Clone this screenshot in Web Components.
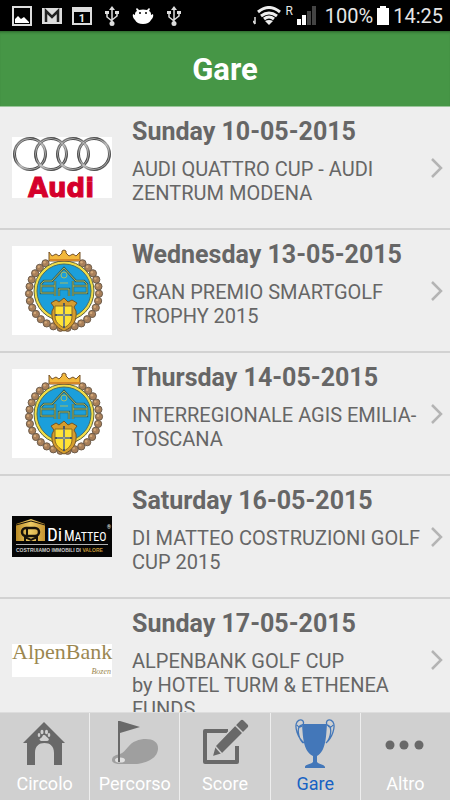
<!DOCTYPE html>
<html lang="it">
<head>
<meta charset="utf-8">
<meta name="viewport" content="width=device-width, initial-scale=1">
<title>Gare</title>
<style>
    body {
        margin: 0;
        background: #eee;
        font-family: Roboto, "Liberation Sans", sans-serif;
    }
</style>
</head>
<body>
<golf-app>
    <status-bar slot="status" time="14:25" battery="100%"></status-bar>
    <page-header slot="header">Gare</page-header>
    <match-row logo="audi" date="Sunday 10-05-2015">AUDI QUATTRO CUP - AUDI ZENTRUM MODENA</match-row>
    <match-row logo="crest" date="Wednesday 13-05-2015">GRAN PREMIO SMARTGOLF TROPHY 2015</match-row>
    <match-row logo="crest" date="Thursday 14-05-2015">INTERREGIONALE AGIS EMILIA-TOSCANA</match-row>
    <match-row logo="dimatteo" date="Saturday 16-05-2015">DI MATTEO COSTRUZIONI GOLF CUP 2015</match-row>
    <match-row logo="alpenbank" date="Sunday 17-05-2015">ALPENBANK GOLF CUP<br>by HOTEL TURM &amp; ETHENEA FUNDS</match-row>
    <tab-bar slot="tabs">
        <tab-item icon="house" href="#circolo">Circolo</tab-item>
        <tab-item icon="flag" href="#percorso">Percorso</tab-item>
        <tab-item icon="edit" href="#score">Score</tab-item>
        <tab-item icon="cup" href="#gare" active>Gare</tab-item>
        <tab-item icon="dots" href="#altro">Altro</tab-item>
    </tab-bar>
</golf-app>

<script>
// Beads of the wreath around the crest
function wreath() {
    let beads = '';
    for (let i = 0; i < 26; i++) {
        const angle = (-58 + i * 296 / 25) * Math.PI / 180;
        const x = 52 + 35 * Math.cos(angle);
        const y = 47 + 35 * Math.sin(angle);
        beads += `<circle cx="${x.toFixed(1)}" cy="${y.toFixed(1)}" r="3.6" fill="#a9805a" stroke="#6d5c4b" stroke-width="1"/>
            <circle cx="${(x - 1).toFixed(1)}" cy="${(y - 1).toFixed(1)}" r="1.2" fill="#d3a878"/>`;
    }
    return beads;
}

const LOGOS = {
    audi: `<svg width="100" height="61" viewBox="0 0 100 61" role="img" aria-label="Audi">
        <defs><linearGradient id="steel" x1="0" y1="0" x2="1" y2="1">
            <stop offset="0" stop-color="#aaa"/><stop offset=".3" stop-color="#3a3a3a"/>
            <stop offset=".55" stop-color="#aaa"/><stop offset=".8" stop-color="#444"/><stop offset="1" stop-color="#888"/>
        </linearGradient></defs>
        <path fill="#fff" d="M0 0h100v61H0z"/>
        <g fill="none" stroke="url(#steel)" stroke-width="3">
            <circle cx="18" cy="17" r="15.5"/><circle cx="39" cy="17" r="15.5"/>
            <circle cx="61" cy="17" r="15.5"/><circle cx="82" cy="17" r="15.5"/>
        </g>
        <g fill="none" stroke="#ddd" stroke-width=".6">
            <circle cx="18" cy="17" r="15.5"/><circle cx="39" cy="17" r="15.5"/>
            <circle cx="61" cy="17" r="15.5"/><circle cx="82" cy="17" r="15.5"/>
        </g>
        <text x="49" y="60" text-anchor="middle" font-family="DejaVu Sans" font-weight="700" font-size="26" fill="#d5002b" stroke="#d5002b" stroke-width="1">Audi</text>
    </svg>`,
    crest: `<svg width="100" height="89" viewBox="0 0 100 89" role="img" aria-label="Golf club crest">
        <path fill="#fff" d="M0 0h100v89H0z"/>
        ${wreath()}
        <circle cx="52" cy="45" r="30" fill="#f0dc47" stroke="#5c6240"/>
        <circle cx="52" cy="45" r="27" fill="#1b9fdb" stroke="#486e67"/>
        <path d="M37 15V6l3 4 4-2 3 2 3-3V5l2-1 2 1v2l3 3 4-2 3 2 4-4v9z" fill="#f2b83c" stroke="#79552b"/>
        <path d="M38 14h30" stroke="#d68829" stroke-width="2"/>
        <g fill="none" stroke="#305f63" stroke-width="2.4">
            <path d="M42 47H29V38l3-3h8l12-13 12 13h8l3 3v9H62M29 40h14M61 40h14M43 35v15M61 35v15M47 50V43h10v7"/>
        </g>
        <g fill="none" stroke="#b7bf58" stroke-width=".9">
            <path d="M42 47H29V38l3-3h8l12-13 12 13h8l3 3v9H62M29 40h14M61 40h14M43 35v15M61 35v15M47 50V43h10v7"/>
            <circle cx="52" cy="29" r="3"/><path d="M48 37h8"/>
        </g>
        <path d="M39 57l5-3 3 2 5-4 4 4 4-2 5 3-3 4 2 4c1 10-3 16-12 20-9-4-13-10-12-20l2-4z" fill="#d69d2d" stroke="#725525"/>
        <path d="M43 60h17v10c0 6-3 9-8 12-5-3-9-6-9-12z" fill="#ffe236" stroke="#8b6c26"/>
        <path d="M52 57v25M43 69h17" stroke="#4c5760" stroke-width="2"/>
        <path d="M52 60v20M45 69h13" stroke="#e8e7c8" stroke-width=".6"/>
    </svg>`,
    dimatteo: `<svg width="100" height="41" viewBox="0 0 100 41" role="img" aria-label="Di Matteo">
        <defs><linearGradient id="gold"><stop stop-color="#b98a25"/><stop offset=".5" stop-color="#edcb65"/><stop offset="1" stop-color="#c49432"/></linearGradient></defs>
        <path fill="#050505" d="M0 0h100v41H0z"/>
        <path fill="url(#gold)" d="M4 8l15-5 14 5v17H4z"/>
        <path d="M4 9l15-4 14 4" fill="none" stroke="#17120a" stroke-width="1"/>
        <rect x="10" y="12" width="17" height="8" rx="4" fill="none" stroke="#17120a" stroke-width="2.500"/>
        <path d="M15 13v6" stroke="#17120a" stroke-width="2"/>
        <path d="M13 25v-4l6 3 6-3v4" fill="none" stroke="#17120a" stroke-width="2"/>
        <text x="35" y="25" font-family="Roboto Condensed, Roboto, sans-serif" font-size="19" fill="#fff">Di</text>
        <text x="52" y="25" font-family="Roboto Condensed, Roboto, sans-serif" font-size="14" fill="#fff">M<tspan font-size="12">ATTEO</tspan></text>
        <text x="95" y="13" font-size="5" fill="#fff">®</text>
        <path d="M4 28.500h92" stroke="#ddd" stroke-width=".8"/>
        <text x="4" y="36" font-family="Liberation Sans, sans-serif" font-size="5" font-weight="700" fill="#ccc">COSTRUIAMO IMMOBILI DI <tspan fill="#c99a39">VALORE</tspan></text>
    </svg>`,
    alpenbank: `<svg width="100" height="33" viewBox="0 0 100 33" role="img" aria-label="AlpenBank Bozen">
        <path fill="#fff" d="M0 0h100v33H0z"/>
        <text x="0" y="15" font-family="Liberation Serif" font-size="22" fill="#9b8750">AlpenBank</text>
        <text x="99" y="30" text-anchor="end" font-family="Liberation Serif" font-style="italic" font-size="8" fill="#9b8750">Bozen</text>
    </svg>`
};

const ICONS = {
    house: `<path fill="currentColor" d="M24 3l21 21h-3v22H34V34c0-7-4-10-9.500-10S15 27 15 34v12H7V24H3z"/>
        <g fill="#d0d0d0"><path d="M24 16c2 0 2 2 4 3 2 2 0 3-1 3h-6c-2-1-2-2 0-3 2-1 1-3 3-3z"/>
        <ellipse cx="22" cy="13" rx="1.500" ry="2.200"/><ellipse cx="26.500" cy="13" rx="1.500" ry="2.200"/><ellipse cx="19" cy="16" rx="1.300" ry="2"/><ellipse cx="29" cy="16" rx="1.300" ry="2"/></g>`,
    flag: `<path fill="#9f9f9f" d="M2 41c0-4 4-5 8-6 6-2 9-11 16-13 10-4 23-2 22 8-1 11-14 14-21 15H10c-4 0-8-1-8-4z"/>
        <ellipse cx="10" cy="41" rx="5" ry="2.600" fill="#e0e0e0"/>
        <path fill="currentColor" d="M8 2h2l20 6-20 6v29H8z"/>`,
    edit: `<path d="M28 12H5v31h32V27" fill="none" stroke="currentColor" stroke-width="4" stroke-linejoin="round"/>
        <path d="M40 1q2-2 4 0l4 4q2 2 0 4L22 35l-10 3 3-11z" fill="currentColor" stroke="#d0d0d0" stroke-width="1.500" stroke-linejoin="round"/>
        <path d="M35 6l8 8M15 27l7 8" stroke="#d0d0d0" stroke-width="1.500"/>`,
    cup: `<g fill="none" stroke="currentColor" stroke-width="1.300"><path d="M14 24C8 19 4 8 7 3c3-4 8-2 6 3M12 6c-6 1-4 13 1 18M7 6c2 3 3 2 5 1M36 24c6-5 10-16 7-21-3-4-8-2-6 3M37 6c6 1 4 13-1 18M43 6c-2 3-3 2-5 1"/></g>
        <path fill="currentColor" d="M12 5h25c-1 13-1 27-10 32v6c1 2 7 2 8 5v1H15v-1c0-3 7-3 8-5v-6C13 32 13 18 12 5z"/>`,
    dots: `<g fill="currentColor"><circle cx="10" cy="26" r="4.500"/><circle cx="24" cy="26" r="4.500"/><circle cx="39" cy="26" r="4.500"/></g>`
};

const USB = `<svg width="14" height="20" viewBox="0 0 14 20" aria-hidden="true"><path d="M7 3v13M2 7v4l5 4M12 6v4l-5 4" fill="none" stroke="#ddd" stroke-width="1.500"/><path fill="#ddd" d="M7 0l3 4H4zM0 5h4v3H0zM10 5h4v3h-4z"/><circle cx="7" cy="17.500" r="2.500" fill="#ddd"/></svg>`;

class GolfApp extends HTMLElement {
    constructor() {
        super();
        this.attachShadow({ mode: 'open' }).innerHTML = `
            <style>
                :host { display: flex; flex-direction: column; height: 100vh; overflow: hidden; }
                main { flex: 1; min-height: 0; overflow-y: auto; scrollbar-width: none; }
            </style>
            <slot name="status"></slot>
            <slot name="header"></slot>
            <main><slot></slot></main>
            <slot name="tabs"></slot>
        `;
    }
}

class StatusBar extends HTMLElement {
    connectedCallback() {
        this.attachShadow({ mode: 'open' }).innerHTML = `
            <style>
                :host {
                    display: flex;
                    flex: none;
                    align-items: center;
                    justify-content: space-between;
                    height: 31px;
                    padding: 0 7px 0 12px;
                    background: #000;
                    color: #e6e6e6;
                    font-size: 20px;
                }
                div { display: flex; align-items: center; }
                svg { display: block; flex: none; }
                .left { gap: 10px; }
                .usb { padding: 0 3px; }
                .right { gap: 4px; }
                .roaming { font-size: 12px; align-self: flex-start; }
                .battery { padding-left: 4px; }
            </style>
            <div class="left">
                <svg width="20" height="20" viewBox="0 0 20 20"><path d="M1 1h18v18H1z" fill="none" stroke="#ddd" stroke-width="2"/><path d="M3 17v-4l3-3 3 3 3-2 5 5v1z" fill="#fff"/></svg>
                <svg width="20" height="16" viewBox="0 0 20 16"><path d="M0 0h20v16H0z" fill="#ddd"/><path d="M4 14V3l6 6 6-6v11" fill="none" stroke="#222" stroke-width="2.500"/></svg>
                <svg width="20" height="18" viewBox="0 0 20 18"><path d="M1 1h18v16H1z" fill="none" stroke="#ddd" stroke-width="2"/><path d="M1 0h18v5H1z" fill="#ddd"/><text x="10" y="15" text-anchor="middle" font-size="11" font-weight="700" fill="#eee">1</text></svg>
                <div class="usb">${USB}</div>
                <svg width="22" height="18" viewBox="0 0 22 18"><path d="M5 1l2 2q4-1 8 0l2-2 1 1-1 2c2 1 2 2 2 4l2-1q1 3-2 6-2 4-8 4t-8-4Q0 10 1 7l2 1c0-2 0-3 2-4L4 2z" fill="#fff"/><circle cx="8" cy="6" r="1"/><circle cx="14" cy="6" r="1"/></svg>
                <div class="usb">${USB}</div>
            </div>
            <div class="right">
                <svg width="28" height="19" viewBox="0 0 28 19"><path d="M2 11v7M0 15l2 3" stroke="#ddd" stroke-width="1.500"/><g fill="none" stroke="#eee" stroke-width="3"><path d="M5 6q11-9 22 0M8 10q8-6 16 0M11 13q5-4 10 0"/></g><path d="M12 15q4-2 8 0l-4 4z" fill="#eee"/></svg>
                <span class="roaming">R</span>
                <svg width="20" height="19" viewBox="0 0 20 19"><path d="M0 13h4v6H0zM5 9h4v10H5z" fill="#fff"/><path d="M10 5h4v14h-4zM15 0h4v19h-4z" fill="#444"/></svg>
                <span class="battery"></span>
                <svg width="12" height="19" viewBox="0 0 12 19"><path d="M3 0h6v2h3v17H0V2h3z" fill="#fff"/></svg>
                <span class="time"></span>
            </div>
        `;
        this.shadowRoot.querySelector('.battery').textContent = this.getAttribute('battery');
        this.shadowRoot.querySelector('.time').textContent = this.getAttribute('time');
    }
}

class PageHeader extends HTMLElement {
    constructor() {
        super();
        this.attachShadow({ mode: 'open' }).innerHTML = `
            <style>
                :host {
                    display: block;
                    flex: none;
                    background: #469646;
                    border-bottom: 1px solid #9ac59a;
                    color: #fff;
                    box-shadow: inset 0 3px 3px -2px #2a602a;
                }
                h1 { margin: 0; padding: 21px 20px 19px; font-size: 31px; line-height: 35px; text-align: center; }
            </style>
            <h1><slot></slot></h1>
        `;
    }
}

class MatchRow extends HTMLElement {
    connectedCallback() {
        this.attachShadow({ mode: 'open' }).innerHTML = `
            <style>
                :host { display: block; border-bottom: 2px solid #d2d2d2; }
                a {
                    display: flex;
                    align-items: center;
                    gap: 20px;
                    min-height: 121px;
                    padding: 0 6px 0 12px;
                    box-sizing: border-box;
                    color: #666;
                    text-decoration: none;
                }
                svg { display: block; flex: none; overflow: visible; }
                .text { flex: 1; align-self: flex-start; min-width: 0; padding: 10px 0 0; }
                h2 { margin: 0 0 10px; font-size: 25px; line-height: 30px; }
                p { margin: 0; font-size: 20px; line-height: 24px; }
                .logo { width: 100px; flex: none; }
                .body { display: flex; flex: 1; align-items: center; align-self: stretch; min-width: 0; }
            </style>
            <a href="#gara">
                <div class="logo">${LOGOS[this.getAttribute('logo')]}</div>
                <div class="body">
                    <div class="text"><h2></h2><p><slot></slot></p></div>
                    <svg width="14" height="22" viewBox="0 0 14 22" aria-hidden="true"><path d="M2 2l9 9-9 9" fill="none" stroke="#b4b4b4" stroke-width="2.500"/></svg>
                </div>
            </a>
        `;
        this.shadowRoot.querySelector('h2').textContent = this.getAttribute('date');
    }
}

class TabBar extends HTMLElement {
    constructor() {
        super();
        this.attachShadow({ mode: 'open' }).innerHTML = `
            <style>
                :host { display: block; flex: none; background: #d0d0d0; border-top: 1px solid #ddd; }
                nav { display: flex; }
                ::slotted(*) { flex: 1; border-right: 1px solid #eee; }
                ::slotted(:last-child) { border-right: 0; }
            </style>
            <nav><slot></slot></nav>
        `;
    }
}

class TabItem extends HTMLElement {
    connectedCallback() {
        this.attachShadow({ mode: 'open' }).innerHTML = `
            <style>
                :host { display: block; color: #696969; }
                :host([active]) { color: #4377b9; }
                a {
                    display: flex;
                    flex-direction: column;
                    align-items: center;
                    gap: 3px;
                    padding: 6px 0 4px;
                    color: inherit;
                    text-decoration: none;
                }
                svg { display: block; }
                span { color: #fff; font-size: 18px; line-height: 24px; }
                :host([active]) span { color: #1762c4; }
            </style>
            <a>
                <svg width="50" height="50" viewBox="0 0 50 50" aria-hidden="true">${ICONS[this.getAttribute('icon')]}</svg>
                <span><slot></slot></span>
            </a>
        `;
        this.shadowRoot.querySelector('a').href = this.getAttribute('href');
    }
}

customElements.define('golf-app', GolfApp);
customElements.define('status-bar', StatusBar);
customElements.define('page-header', PageHeader);
customElements.define('match-row', MatchRow);
customElements.define('tab-bar', TabBar);
customElements.define('tab-item', TabItem);
</script>
</body>
</html>
